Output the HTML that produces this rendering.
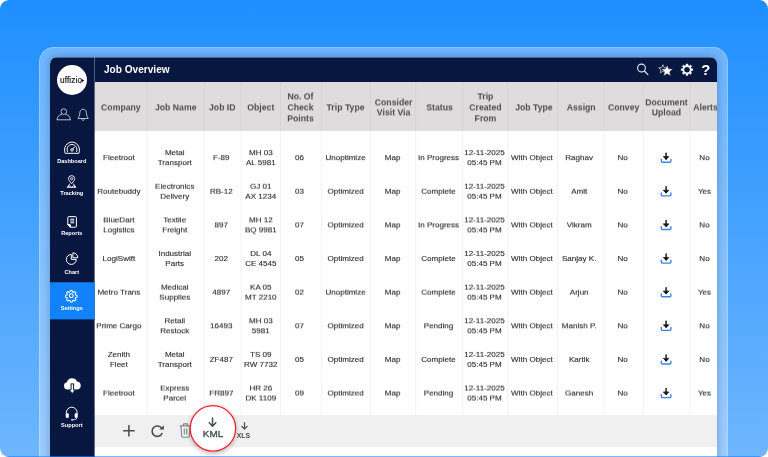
<!DOCTYPE html>
<html lang="en"><head><meta charset="utf-8"><title>Job Overview</title>
<style>
html,body{margin:0;padding:0;background:#fff;}
body{width:768px;height:457px;overflow:hidden;position:relative;font-family:"Liberation Sans",sans-serif;}
.bg{will-change:transform;position:absolute;left:0;top:0;width:768px;height:457px;border-radius:9px;overflow:hidden;background:linear-gradient(180deg,#1e8fff 0%,#6eb6ff 100%);}
.frame{position:absolute;left:39px;top:47px;width:689px;height:430px;border-radius:15px;background:rgba(255,255,255,.33);box-shadow:inset 0 0 0 1px rgba(255,255,255,.22);}
.shadow{position:absolute;left:50px;top:57px;width:667px;height:420px;border-radius:7px;box-shadow:0 0 8px 1px rgba(10,40,100,.26);}
.panel{position:absolute;left:50px;top:57px;width:667px;height:400px;border-radius:7px 7px 0 0;overflow:hidden;background:#fff;}
.side{position:absolute;left:0;top:0;width:45px;height:100%;background:#08173f;}
.top{position:absolute;left:45px;top:0;right:0;height:25px;background:#08173f;box-shadow:0 1px 0 #737689;}
.top:after{content:'';position:absolute;left:-45px;right:0;top:0;height:1px;background:rgba(150,180,225,.5);}
.top:before{content:'';position:absolute;left:-1px;top:0;width:1px;height:25px;background:#4f5b7c;}
.title{position:absolute;left:9.2px;top:0;line-height:25px;color:#fff;font-weight:bold;font-size:10.1px;letter-spacing:0;transform:translate3d(0,0,0) rotate(.01deg);}
.q{position:absolute;left:604.8px;top:.6px;width:12px;text-align:center;line-height:25px;font-size:14.8px;font-weight:bold;color:#fff;}
.thead{position:absolute;left:45px;right:0;top:25px;height:49px;background:#dedcdd;}
.th{position:absolute;top:26px;height:48.5px;display:flex;align-items:center;justify-content:center;text-align:center;font-size:8.7px;line-height:10.6px;font-weight:bold;color:#4d4d4d;white-space:nowrap;transform:translate3d(0,.4px,0) rotate(.01deg);}
.td{position:absolute;height:33.6px;display:flex;align-items:center;justify-content:center;text-align:center;font-size:8.05px;line-height:10.3px;color:#2a2a2a;-webkit-text-stroke:.12px #2a2a2a;white-space:nowrap;}
.foot{position:absolute;left:45px;right:0;top:358px;height:31.6px;background:#f0f0f0;}
.lbl{position:absolute;left:0;width:43.6px;text-align:center;color:#fff;font-weight:bold;font-size:5.6px;line-height:7px;}
.logo{position:absolute;left:7px;top:7.5px;width:30px;height:30px;border-radius:50%;background:#fff;}
.logo span{position:absolute;left:3.1px;top:10.7px;font-size:8.3px;line-height:10px;color:#111118;letter-spacing:.08px;white-space:nowrap;-webkit-text-stroke:.15px #111118;transform:translate3d(0,0,0) rotate(.01deg);}
.kml{position:absolute;left:140px;top:348px;width:46px;height:46.6px;border-radius:50%;background:#fff;box-shadow:0 1.5px 5px rgba(0,0,0,.3);}
.kml span{position:absolute;left:0;right:0;top:22.6px;transform:translate3d(0,0,0) rotate(.01deg);text-align:center;font-size:9.9px;line-height:12px;color:#44504a;-webkit-text-stroke:.35px #44504a;}
.xls{position:absolute;left:183.4px;top:374.6px;width:20px;text-align:center;font-size:6.9px;line-height:8px;color:#44504a;font-weight:bold;}
.ov{position:absolute;left:0;top:0;}
.edge{position:absolute;left:0;top:456px;width:768px;height:1px;background:rgba(30,130,255,.6);}
svg{display:block;overflow:visible}
</style></head><body>
<div class="bg">
<div class="frame"></div><div class="shadow"></div>
<div class="panel">
<div class="side">
<div class="logo"><span>uffizio</span></div>
<div class="lbl" style="top:101.1px">Dashboard</div>
<div class="lbl" style="top:133px">Tracking</div>
<div class="lbl" style="top:173.3px">Reports</div>
<div class="lbl" style="top:211.6px">Chart</div>
<div class="lbl" style="top:248px;z-index:2">Settings</div>
<div class="lbl" style="top:365px">Support</div>
</div>
<div class="top"><div class="title">Job Overview</div><div class="q">?</div></div>
<div class="thead"></div>
<div class="th" style="left:44.9px;width:51.8px"><span>Company</span></div>
<div class="th" style="left:96.8px;width:57.5px"><span>Job Name</span></div>
<div class="th" style="left:154.3px;width:36.6px"><span>Job ID</span></div>
<div class="th" style="left:190.9px;width:39.6px"><span>Object</span></div>
<div class="th" style="left:229.7px;width:40.9px"><span>No. Of<br>Check<br>Points</span></div>
<div class="th" style="left:271.4px;width:49.1px"><span>Trip Type</span></div>
<div class="th" style="left:320.5px;width:45.2px"><span>Consider<br>Visit Via</span></div>
<div class="th" style="left:365.7px;width:47.1px"><span>Status</span></div>
<div class="th" style="left:412.8px;width:44.9px"><span>Trip<br>Created<br>From</span></div>
<div class="th" style="left:458.9px;width:49.8px"><span>Job Type</span></div>
<div class="th" style="left:507.5px;width:46.4px"><span>Assign</span></div>
<div class="th" style="left:553.9px;width:39.3px"><span>Convey</span></div>
<div class="th" style="left:593.2px;width:46.8px"><span>Document<br>Upload</span></div>
<div class="th" style="left:641.6px;width:27px"><span>Alerts</span></div>
<div class="td" style="left:43.4px;top:84px;width:51.8px;transform:translate3d(0,0.15px,0) rotate(.01deg)"><span>Fleetroot</span></div>
<div class="td" style="left:96.1px;top:84px;width:57.5px;transform:translate3d(0,0.15px,0) rotate(.01deg)"><span>Metal<br>Transport</span></div>
<div class="td" style="left:152.8px;top:84px;width:36.6px;transform:translate3d(0,0.15px,0) rotate(.01deg)"><span>F-89</span></div>
<div class="td" style="left:190.7px;top:84px;width:39.6px;transform:translate3d(0,0.15px,0) rotate(.01deg)"><span>MH 03<br>AL 5981</span></div>
<div class="td" style="left:229.1px;top:84px;width:40.9px;transform:translate3d(0,0.15px,0) rotate(.01deg)"><span>06</span></div>
<div class="td" style="left:270.6px;top:84px;width:49.1px;transform:translate3d(0,0.15px,0) rotate(.01deg)"><span>Unoptimize</span></div>
<div class="td" style="left:319.8px;top:84px;width:45.2px;transform:translate3d(0,0.15px,0) rotate(.01deg)"><span>Map</span></div>
<div class="td" style="left:364.5px;top:84px;width:47.1px;transform:translate3d(0,0.15px,0) rotate(.01deg)"><span>In Progress</span></div>
<div class="td" style="left:412.05px;top:84px;width:44.9px;transform:translate3d(0,0.15px,0) rotate(.01deg)"><span>12-11-2025<br>05:45 PM</span></div>
<div class="td" style="left:457.3px;top:84px;width:49.8px;transform:translate3d(0,0.15px,0) rotate(.01deg)"><span>With Object</span></div>
<div class="td" style="left:505.9px;top:84px;width:46.4px;transform:translate3d(0,0.15px,0) rotate(.01deg)"><span>Raghav</span></div>
<div class="td" style="left:553px;top:84px;width:39.3px;transform:translate3d(0,0.15px,0) rotate(.01deg)"><span>No</span></div>
<div class="td" style="left:640.6px;top:84px;width:27px;transform:translate3d(0,0.15px,0) rotate(.01deg)"><span>No</span></div>
<div class="td" style="left:43.4px;top:117px;width:51.8px;transform:translate3d(0,0.78px,0) rotate(.01deg)"><span>Routebuddy</span></div>
<div class="td" style="left:96.1px;top:117px;width:57.5px;transform:translate3d(0,0.78px,0) rotate(.01deg)"><span>Electronics<br>Delivery</span></div>
<div class="td" style="left:152.8px;top:117px;width:36.6px;transform:translate3d(0,0.78px,0) rotate(.01deg)"><span>RB-12</span></div>
<div class="td" style="left:190.7px;top:117px;width:39.6px;transform:translate3d(0,0.78px,0) rotate(.01deg)"><span>GJ 01<br>AX 1234</span></div>
<div class="td" style="left:229.1px;top:117px;width:40.9px;transform:translate3d(0,0.78px,0) rotate(.01deg)"><span>03</span></div>
<div class="td" style="left:270.6px;top:117px;width:49.1px;transform:translate3d(0,0.78px,0) rotate(.01deg)"><span>Optimized</span></div>
<div class="td" style="left:319.8px;top:117px;width:45.2px;transform:translate3d(0,0.78px,0) rotate(.01deg)"><span>Map</span></div>
<div class="td" style="left:364.5px;top:117px;width:47.1px;transform:translate3d(0,0.78px,0) rotate(.01deg)"><span>Complete</span></div>
<div class="td" style="left:412.05px;top:117px;width:44.9px;transform:translate3d(0,0.78px,0) rotate(.01deg)"><span>12-11-2025<br>05:45 PM</span></div>
<div class="td" style="left:457.3px;top:117px;width:49.8px;transform:translate3d(0,0.78px,0) rotate(.01deg)"><span>With Object</span></div>
<div class="td" style="left:505.9px;top:117px;width:46.4px;transform:translate3d(0,0.78px,0) rotate(.01deg)"><span>Amit</span></div>
<div class="td" style="left:553px;top:117px;width:39.3px;transform:translate3d(0,0.78px,0) rotate(.01deg)"><span>No</span></div>
<div class="td" style="left:640.6px;top:117px;width:27px;transform:translate3d(0,0.78px,0) rotate(.01deg)"><span>Yes</span></div>
<div class="td" style="left:43.4px;top:151px;width:51.8px;transform:translate3d(0,0.41px,0) rotate(.01deg)"><span>BlueDart<br>Logistics</span></div>
<div class="td" style="left:96.1px;top:151px;width:57.5px;transform:translate3d(0,0.41px,0) rotate(.01deg)"><span>Textile<br>Freight</span></div>
<div class="td" style="left:152.8px;top:151px;width:36.6px;transform:translate3d(0,0.41px,0) rotate(.01deg)"><span>897</span></div>
<div class="td" style="left:190.7px;top:151px;width:39.6px;transform:translate3d(0,0.41px,0) rotate(.01deg)"><span>MH 12<br>BQ 9981</span></div>
<div class="td" style="left:229.1px;top:151px;width:40.9px;transform:translate3d(0,0.41px,0) rotate(.01deg)"><span>07</span></div>
<div class="td" style="left:270.6px;top:151px;width:49.1px;transform:translate3d(0,0.41px,0) rotate(.01deg)"><span>Optimized</span></div>
<div class="td" style="left:319.8px;top:151px;width:45.2px;transform:translate3d(0,0.41px,0) rotate(.01deg)"><span>Map</span></div>
<div class="td" style="left:364.5px;top:151px;width:47.1px;transform:translate3d(0,0.41px,0) rotate(.01deg)"><span>In Progress</span></div>
<div class="td" style="left:412.05px;top:151px;width:44.9px;transform:translate3d(0,0.41px,0) rotate(.01deg)"><span>12-11-2025<br>05:45 PM</span></div>
<div class="td" style="left:457.3px;top:151px;width:49.8px;transform:translate3d(0,0.41px,0) rotate(.01deg)"><span>With Object</span></div>
<div class="td" style="left:505.9px;top:151px;width:46.4px;transform:translate3d(0,0.41px,0) rotate(.01deg)"><span>Vikram</span></div>
<div class="td" style="left:553px;top:151px;width:39.3px;transform:translate3d(0,0.41px,0) rotate(.01deg)"><span>No</span></div>
<div class="td" style="left:640.6px;top:151px;width:27px;transform:translate3d(0,0.41px,0) rotate(.01deg)"><span>No</span></div>
<div class="td" style="left:43.4px;top:185px;width:51.8px;transform:translate3d(0,0.04px,0) rotate(.01deg)"><span>LogiSwift</span></div>
<div class="td" style="left:96.1px;top:185px;width:57.5px;transform:translate3d(0,0.04px,0) rotate(.01deg)"><span>Industrial<br>Parts</span></div>
<div class="td" style="left:152.8px;top:185px;width:36.6px;transform:translate3d(0,0.04px,0) rotate(.01deg)"><span>202</span></div>
<div class="td" style="left:190.7px;top:185px;width:39.6px;transform:translate3d(0,0.04px,0) rotate(.01deg)"><span>DL 04<br>CE 4545</span></div>
<div class="td" style="left:229.1px;top:185px;width:40.9px;transform:translate3d(0,0.04px,0) rotate(.01deg)"><span>05</span></div>
<div class="td" style="left:270.6px;top:185px;width:49.1px;transform:translate3d(0,0.04px,0) rotate(.01deg)"><span>Optimized</span></div>
<div class="td" style="left:319.8px;top:185px;width:45.2px;transform:translate3d(0,0.04px,0) rotate(.01deg)"><span>Map</span></div>
<div class="td" style="left:364.5px;top:185px;width:47.1px;transform:translate3d(0,0.04px,0) rotate(.01deg)"><span>Complete</span></div>
<div class="td" style="left:412.05px;top:185px;width:44.9px;transform:translate3d(0,0.04px,0) rotate(.01deg)"><span>12-11-2025<br>05:45 PM</span></div>
<div class="td" style="left:457.3px;top:185px;width:49.8px;transform:translate3d(0,0.04px,0) rotate(.01deg)"><span>With Object</span></div>
<div class="td" style="left:505.9px;top:185px;width:46.4px;transform:translate3d(0,0.04px,0) rotate(.01deg)"><span>Sanjay K.</span></div>
<div class="td" style="left:553px;top:185px;width:39.3px;transform:translate3d(0,0.04px,0) rotate(.01deg)"><span>No</span></div>
<div class="td" style="left:640.6px;top:185px;width:27px;transform:translate3d(0,0.04px,0) rotate(.01deg)"><span>No</span></div>
<div class="td" style="left:43.4px;top:218px;width:51.8px;transform:translate3d(0,0.67px,0) rotate(.01deg)"><span>Metro Trans</span></div>
<div class="td" style="left:96.1px;top:218px;width:57.5px;transform:translate3d(0,0.67px,0) rotate(.01deg)"><span>Medical<br>Supplies</span></div>
<div class="td" style="left:152.8px;top:218px;width:36.6px;transform:translate3d(0,0.67px,0) rotate(.01deg)"><span>4897</span></div>
<div class="td" style="left:190.7px;top:218px;width:39.6px;transform:translate3d(0,0.67px,0) rotate(.01deg)"><span>KA 05<br>MT 2210</span></div>
<div class="td" style="left:229.1px;top:218px;width:40.9px;transform:translate3d(0,0.67px,0) rotate(.01deg)"><span>02</span></div>
<div class="td" style="left:270.6px;top:218px;width:49.1px;transform:translate3d(0,0.67px,0) rotate(.01deg)"><span>Unoptimize</span></div>
<div class="td" style="left:319.8px;top:218px;width:45.2px;transform:translate3d(0,0.67px,0) rotate(.01deg)"><span>Map</span></div>
<div class="td" style="left:364.5px;top:218px;width:47.1px;transform:translate3d(0,0.67px,0) rotate(.01deg)"><span>Complete</span></div>
<div class="td" style="left:412.05px;top:218px;width:44.9px;transform:translate3d(0,0.67px,0) rotate(.01deg)"><span>12-11-2025<br>05:45 PM</span></div>
<div class="td" style="left:457.3px;top:218px;width:49.8px;transform:translate3d(0,0.67px,0) rotate(.01deg)"><span>With Object</span></div>
<div class="td" style="left:505.9px;top:218px;width:46.4px;transform:translate3d(0,0.67px,0) rotate(.01deg)"><span>Arjun</span></div>
<div class="td" style="left:553px;top:218px;width:39.3px;transform:translate3d(0,0.67px,0) rotate(.01deg)"><span>No</span></div>
<div class="td" style="left:640.6px;top:218px;width:27px;transform:translate3d(0,0.67px,0) rotate(.01deg)"><span>Yes</span></div>
<div class="td" style="left:43.4px;top:252px;width:51.8px;transform:translate3d(0,0.3px,0) rotate(.01deg)"><span>Prime Cargo</span></div>
<div class="td" style="left:96.1px;top:252px;width:57.5px;transform:translate3d(0,0.3px,0) rotate(.01deg)"><span>Retail<br>Restock</span></div>
<div class="td" style="left:152.8px;top:252px;width:36.6px;transform:translate3d(0,0.3px,0) rotate(.01deg)"><span>16493</span></div>
<div class="td" style="left:190.7px;top:252px;width:39.6px;transform:translate3d(0,0.3px,0) rotate(.01deg)"><span>MH 03<br>5981</span></div>
<div class="td" style="left:229.1px;top:252px;width:40.9px;transform:translate3d(0,0.3px,0) rotate(.01deg)"><span>07</span></div>
<div class="td" style="left:270.6px;top:252px;width:49.1px;transform:translate3d(0,0.3px,0) rotate(.01deg)"><span>Optimized</span></div>
<div class="td" style="left:319.8px;top:252px;width:45.2px;transform:translate3d(0,0.3px,0) rotate(.01deg)"><span>Map</span></div>
<div class="td" style="left:364.5px;top:252px;width:47.1px;transform:translate3d(0,0.3px,0) rotate(.01deg)"><span>Pending</span></div>
<div class="td" style="left:412.05px;top:252px;width:44.9px;transform:translate3d(0,0.3px,0) rotate(.01deg)"><span>12-11-2025<br>05:45 PM</span></div>
<div class="td" style="left:457.3px;top:252px;width:49.8px;transform:translate3d(0,0.3px,0) rotate(.01deg)"><span>With Object</span></div>
<div class="td" style="left:505.9px;top:252px;width:46.4px;transform:translate3d(0,0.3px,0) rotate(.01deg)"><span>Manish P.</span></div>
<div class="td" style="left:553px;top:252px;width:39.3px;transform:translate3d(0,0.3px,0) rotate(.01deg)"><span>No</span></div>
<div class="td" style="left:640.6px;top:252px;width:27px;transform:translate3d(0,0.3px,0) rotate(.01deg)"><span>No</span></div>
<div class="td" style="left:43.4px;top:285px;width:51.8px;transform:translate3d(0,0.93px,0) rotate(.01deg)"><span>Zenith<br>Fleet</span></div>
<div class="td" style="left:96.1px;top:285px;width:57.5px;transform:translate3d(0,0.93px,0) rotate(.01deg)"><span>Metal<br>Transport</span></div>
<div class="td" style="left:152.8px;top:285px;width:36.6px;transform:translate3d(0,0.93px,0) rotate(.01deg)"><span>ZF487</span></div>
<div class="td" style="left:190.7px;top:285px;width:39.6px;transform:translate3d(0,0.93px,0) rotate(.01deg)"><span>TS 09<br>RW 7732</span></div>
<div class="td" style="left:229.1px;top:285px;width:40.9px;transform:translate3d(0,0.93px,0) rotate(.01deg)"><span>05</span></div>
<div class="td" style="left:270.6px;top:285px;width:49.1px;transform:translate3d(0,0.93px,0) rotate(.01deg)"><span>Optimized</span></div>
<div class="td" style="left:319.8px;top:285px;width:45.2px;transform:translate3d(0,0.93px,0) rotate(.01deg)"><span>Map</span></div>
<div class="td" style="left:364.5px;top:285px;width:47.1px;transform:translate3d(0,0.93px,0) rotate(.01deg)"><span>Complete</span></div>
<div class="td" style="left:412.05px;top:285px;width:44.9px;transform:translate3d(0,0.93px,0) rotate(.01deg)"><span>12-11-2025<br>05:45 PM</span></div>
<div class="td" style="left:457.3px;top:285px;width:49.8px;transform:translate3d(0,0.93px,0) rotate(.01deg)"><span>With Object</span></div>
<div class="td" style="left:505.9px;top:285px;width:46.4px;transform:translate3d(0,0.93px,0) rotate(.01deg)"><span>Kartik</span></div>
<div class="td" style="left:553px;top:285px;width:39.3px;transform:translate3d(0,0.93px,0) rotate(.01deg)"><span>No</span></div>
<div class="td" style="left:640.6px;top:285px;width:27px;transform:translate3d(0,0.93px,0) rotate(.01deg)"><span>No</span></div>
<div class="td" style="left:43.4px;top:319px;width:51.8px;transform:translate3d(0,0.56px,0) rotate(.01deg)"><span>Fleetroot</span></div>
<div class="td" style="left:96.1px;top:319px;width:57.5px;transform:translate3d(0,0.56px,0) rotate(.01deg)"><span>Express<br>Parcel</span></div>
<div class="td" style="left:152.8px;top:319px;width:36.6px;transform:translate3d(0,0.56px,0) rotate(.01deg)"><span>FR897</span></div>
<div class="td" style="left:190.7px;top:319px;width:39.6px;transform:translate3d(0,0.56px,0) rotate(.01deg)"><span>HR 26<br>DK 1109</span></div>
<div class="td" style="left:229.1px;top:319px;width:40.9px;transform:translate3d(0,0.56px,0) rotate(.01deg)"><span>09</span></div>
<div class="td" style="left:270.6px;top:319px;width:49.1px;transform:translate3d(0,0.56px,0) rotate(.01deg)"><span>Optimized</span></div>
<div class="td" style="left:319.8px;top:319px;width:45.2px;transform:translate3d(0,0.56px,0) rotate(.01deg)"><span>Map</span></div>
<div class="td" style="left:364.5px;top:319px;width:47.1px;transform:translate3d(0,0.56px,0) rotate(.01deg)"><span>Pending</span></div>
<div class="td" style="left:412.05px;top:319px;width:44.9px;transform:translate3d(0,0.56px,0) rotate(.01deg)"><span>12-11-2025<br>05:45 PM</span></div>
<div class="td" style="left:457.3px;top:319px;width:49.8px;transform:translate3d(0,0.56px,0) rotate(.01deg)"><span>With Object</span></div>
<div class="td" style="left:505.9px;top:319px;width:46.4px;transform:translate3d(0,0.56px,0) rotate(.01deg)"><span>Ganesh</span></div>
<div class="td" style="left:553px;top:319px;width:39.3px;transform:translate3d(0,0.56px,0) rotate(.01deg)"><span>No</span></div>
<div class="td" style="left:640.6px;top:319px;width:27px;transform:translate3d(0,0.56px,0) rotate(.01deg)"><span>Yes</span></div>
<div class="foot"></div>
<svg class="ov" style="left:-50px;top:-57px" width="768" height="457" viewBox="0 0 768 457"><rect x="146.30" y="82.5" width="1" height="48.5" fill="#d6d4d5"/><rect x="146.30" y="131" width="1" height="284" fill="#f3f3f3"/><rect x="203.80" y="82.5" width="1" height="48.5" fill="#d6d4d5"/><rect x="203.80" y="131" width="1" height="284" fill="#f3f3f3"/><rect x="240.40" y="82.5" width="1" height="48.5" fill="#d6d4d5"/><rect x="240.40" y="131" width="1" height="284" fill="#f3f3f3"/><rect x="280.00" y="82.5" width="1" height="48.5" fill="#d6d4d5"/><rect x="280.00" y="131" width="1" height="284" fill="#f3f3f3"/><rect x="320.90" y="82.5" width="1" height="48.5" fill="#d6d4d5"/><rect x="320.90" y="131" width="1" height="284" fill="#f3f3f3"/><rect x="370.00" y="82.5" width="1" height="48.5" fill="#d6d4d5"/><rect x="370.00" y="131" width="1" height="284" fill="#f3f3f3"/><rect x="415.20" y="82.5" width="1" height="48.5" fill="#d6d4d5"/><rect x="415.20" y="131" width="1" height="284" fill="#f3f3f3"/><rect x="462.30" y="82.5" width="1" height="48.5" fill="#d6d4d5"/><rect x="462.30" y="131" width="1" height="284" fill="#f3f3f3"/><rect x="507.20" y="82.5" width="1" height="48.5" fill="#d6d4d5"/><rect x="507.20" y="131" width="1" height="284" fill="#f3f3f3"/><rect x="557.00" y="82.5" width="1" height="48.5" fill="#d6d4d5"/><rect x="557.00" y="131" width="1" height="284" fill="#f3f3f3"/><rect x="603.40" y="82.5" width="1" height="48.5" fill="#d6d4d5"/><rect x="603.40" y="131" width="1" height="284" fill="#f3f3f3"/><rect x="642.70" y="82.5" width="1" height="48.5" fill="#d6d4d5"/><rect x="642.70" y="131" width="1" height="284" fill="#f3f3f3"/><rect x="689.50" y="82.5" width="1" height="48.5" fill="#d6d4d5"/><rect x="689.50" y="131" width="1" height="284" fill="#f3f3f3"/><rect x="94.600" y="82.500" width=".4" height="48.500" fill="#dedcdd"/><rect x="94.600" y="131" width=".4" height="284" fill="#fff"/><rect x="94.600" y="415" width=".4" height="31.600" fill="#f0f0f0"/><rect x="94.600" y="446.600" width=".4" height="10" fill="#fff"/><rect x="50" y="282.3" width="44.600" height="37.100" fill="#1282fa"/><path d="M81.600 78.900L84.300 80.600L81.600 82.300Z" fill="#111118"/><g fill="none" stroke="#c9ceda" stroke-width=".9"><circle cx="63.8" cy="111.6" r="2.8"/><path d="M57.1 119.8C57.1 116.2 59.6 114.8 61.9 114.3M70.3 119.8C70.3 116.2 67.8 114.8 65.7 114.300M56.700 119.800H70.700"/><path d="M83.100 109.200C80.600 109.200 79.800 111.400 79.800 113.200C79.800 116 78.400 117.200 78 118.500H88.200C87.800 117.200 86.400 116 86.400 113.200C86.400 111.400 85.600 109.200 83.100 109.200ZM81.800 119.300C82 120.700 84.200 120.700 84.400 119.300"/></g><g transform="translate(64,141.3)" fill="none" stroke="#fff" stroke-width="1"><path d="M1.200 12C-1 6 3 .8 8 .8S17 6 14.800 12Z"/><path d="M3.600 10.600C2 6.600 4.600 3.200 8 3.200S14 6.600 12.400 10.600"/><circle cx="8" cy="8.600" r="1.200"/><path d="M8.800 7.700L10.600 5.400"/></g><g transform="translate(66.6,175)" fill="none" stroke="#fff" stroke-width=".9" stroke-linejoin="round"><path d="M5 8.600C3 6.300 1.900 5 1.900 3.700A3.100 3.100 0 0 1 8.100 3.700C8.100 5 7 6.300 5 8.600Z"/><circle cx="5" cy="3.700" r="1.100"/><path d="M3.300 8.600L.8 12.300H9.200L6.700 8.600M.8 12.300L3.400 10.800L5 12.300L6.600 10.800L9.200 12.300"/></g><g transform="translate(67,216)" fill="none" stroke="#fff" stroke-width="1" stroke-linejoin="round"><path d="M.8 8.800V1.600Q.8 .6 1.800 .6H8.400Q9.400 .6 9.400 1.600V10.200Q9.400 11.200 8.400 11.200H3.200L.8 8.800H3.200V11.200"/><path d="M.8 8.800H3.200V11.200Z" fill="#fff"/><path d="M3.300 3.200H7.200M3.300 5H7.200M3.300 6.800H7.200"/></g><g transform="translate(65.5,252)" fill="none" stroke="#fff" stroke-width="1" stroke-linejoin="round"><path d="M5.800 2.400A5 5 0 1 0 10.800 7.400H5.800Z"/><path d="M7.400 .8A5 5 0 0 1 12.300 5.800H7.400Z"/></g><g transform="translate(64.75,289.15) scale(.5417)" fill="none" stroke="#fff" stroke-width="1.850" stroke-linejoin="round"><circle cx="12" cy="12" r="3.600"/><path d="M10.300 2.500h3.400l.5 2.700 1.900.8 2.300-1.600 2.400 2.400-1.600 2.300.8 1.900 2.700.5v3.400l-2.700.5-.8 1.900 1.600 2.300-2.400 2.400-2.300-1.600-1.900.8-.5 2.700h-3.400l-.5-2.700-1.900-.8-2.300 1.600-2.400-2.400 1.600-2.300-.8-1.900-2.700-.5v-3.400l2.700-.5.800-1.900-1.600-2.300 2.400-2.400 2.300 1.600 1.900-.8z"/></g><g transform="translate(63.2,378)"><path d="M4.400 11.600A3.700 3.700 0 0 1 3.700 4.300A5.300 5.300 0 0 1 13.700 3.500A4.100 4.100 0 0 1 14.300 11.600Z" fill="#fff"/><path d="M9.100 5.400V12.200" stroke="#08173f" stroke-width="3.500" fill="none"/><path d="M6.200 11.700H12L9.100 15.400Z" fill="#fff" stroke="#08173f" stroke-width=".7"/><path d="M9.100 6.300V12.500" stroke="#fff" stroke-width="1.500" fill="none"/></g><g transform="translate(64.35,406)" fill="none" stroke="#fff" stroke-width="1"><path d="M2 8.600V6.600A5.400 5.400 0 0 1 12.800 6.600V8.600"/><rect x="1.700" y="7.400" width="2.500" height="4.400" rx="1.100" fill="#fff" stroke-width=".6"/><rect x="10.600" y="7.400" width="2.500" height="4.400" rx="1.100" fill="#fff" stroke-width=".6"/><path d="M12.400 11.800C12.400 13.400 10.500 13.800 8.600 13.800" stroke-width=".9"/><circle cx="7.700" cy="13.800" r=".9" fill="#fff" stroke="none"/></g><g fill="none" stroke="#e3e6ee" stroke-width="1.100" stroke-linecap="round"><circle cx="641.5" cy="68" r="3.900"/><path d="M644.400 71L647.900 74.700"/></g><path d="M662.90 64.70L664.10 67.54L667.18 67.81L664.85 69.83L665.55 72.84L662.90 71.25L660.25 72.84L660.95 69.83L658.62 67.81L661.70 67.54Z" fill="none" stroke="#e3e6ee" stroke-width=".7" stroke-linejoin="round"/><path d="M667.10 64.90L668.69 68.82L672.90 69.11L669.67 71.83L670.69 75.94L667.10 73.70L663.51 75.94L664.53 71.83L661.30 69.11L665.51 68.82Z" fill="#fff" stroke="#08173f" stroke-width=".5" stroke-linejoin="round"/><path d="M686.04 65.51L686.09 63.97L687.91 63.97L687.96 65.51L689.28 66.06L690.41 65.01L691.69 66.29L690.64 67.42L691.19 68.74L692.73 68.79L692.73 70.61L691.19 70.66L690.64 71.98L691.69 73.11L690.41 74.39L689.28 73.34L687.96 73.89L687.91 75.43L686.09 75.43L686.04 73.89L684.72 73.34L683.59 74.39L682.31 73.11L683.36 71.98L682.81 70.66L681.27 70.61L681.27 68.79L682.81 68.74L683.36 67.42L682.31 66.29L683.59 65.01L684.72 66.06Z" fill="#fff" stroke="#fff" stroke-width=".5" stroke-linejoin="round"/><circle cx="687" cy="69.700" r="2.800" fill="#08173f"/><g transform="translate(666.1,157.75)" fill="none" stroke-linecap="round" stroke-linejoin="round"><path d="M0 -4.600V1.200" stroke="#111" stroke-width="1.400"/><path d="M-2.500 -.9L0 1.700L2.500 -.9Z" fill="#111" stroke="#111" stroke-width=".8"/><path d="M-4.800 1.600V3.300Q-4.800 4.500 -3.600 4.500H3.600Q4.800 4.500 4.800 3.300V1.600" stroke="#3b82f6" stroke-width="1.400"/></g><g transform="translate(666.1,191.38)" fill="none" stroke-linecap="round" stroke-linejoin="round"><path d="M0 -4.600V1.200" stroke="#111" stroke-width="1.400"/><path d="M-2.500 -.9L0 1.700L2.500 -.9Z" fill="#111" stroke="#111" stroke-width=".8"/><path d="M-4.800 1.600V3.300Q-4.800 4.500 -3.600 4.500H3.600Q4.800 4.500 4.800 3.300V1.600" stroke="#3b82f6" stroke-width="1.400"/></g><g transform="translate(666.1,225.01)" fill="none" stroke-linecap="round" stroke-linejoin="round"><path d="M0 -4.600V1.200" stroke="#111" stroke-width="1.400"/><path d="M-2.500 -.9L0 1.700L2.500 -.9Z" fill="#111" stroke="#111" stroke-width=".8"/><path d="M-4.800 1.600V3.300Q-4.800 4.500 -3.600 4.500H3.600Q4.800 4.500 4.800 3.300V1.600" stroke="#3b82f6" stroke-width="1.400"/></g><g transform="translate(666.1,258.64)" fill="none" stroke-linecap="round" stroke-linejoin="round"><path d="M0 -4.600V1.200" stroke="#111" stroke-width="1.400"/><path d="M-2.500 -.9L0 1.700L2.500 -.9Z" fill="#111" stroke="#111" stroke-width=".8"/><path d="M-4.800 1.600V3.300Q-4.800 4.500 -3.600 4.500H3.600Q4.800 4.500 4.800 3.300V1.600" stroke="#3b82f6" stroke-width="1.400"/></g><g transform="translate(666.1,292.27)" fill="none" stroke-linecap="round" stroke-linejoin="round"><path d="M0 -4.600V1.200" stroke="#111" stroke-width="1.400"/><path d="M-2.500 -.9L0 1.700L2.500 -.9Z" fill="#111" stroke="#111" stroke-width=".8"/><path d="M-4.800 1.600V3.300Q-4.800 4.500 -3.600 4.500H3.600Q4.800 4.500 4.800 3.300V1.600" stroke="#3b82f6" stroke-width="1.400"/></g><g transform="translate(666.1,325.90)" fill="none" stroke-linecap="round" stroke-linejoin="round"><path d="M0 -4.600V1.200" stroke="#111" stroke-width="1.400"/><path d="M-2.500 -.9L0 1.700L2.500 -.9Z" fill="#111" stroke="#111" stroke-width=".8"/><path d="M-4.800 1.600V3.300Q-4.800 4.500 -3.600 4.500H3.600Q4.800 4.500 4.800 3.300V1.600" stroke="#3b82f6" stroke-width="1.400"/></g><g transform="translate(666.1,359.53)" fill="none" stroke-linecap="round" stroke-linejoin="round"><path d="M0 -4.600V1.200" stroke="#111" stroke-width="1.400"/><path d="M-2.500 -.9L0 1.700L2.500 -.9Z" fill="#111" stroke="#111" stroke-width=".8"/><path d="M-4.800 1.600V3.300Q-4.800 4.500 -3.600 4.500H3.600Q4.800 4.500 4.800 3.300V1.600" stroke="#3b82f6" stroke-width="1.400"/></g><g transform="translate(666.1,393.16)" fill="none" stroke-linecap="round" stroke-linejoin="round"><path d="M0 -4.600V1.200" stroke="#111" stroke-width="1.400"/><path d="M-2.500 -.9L0 1.700L2.500 -.9Z" fill="#111" stroke="#111" stroke-width=".8"/><path d="M-4.800 1.600V3.300Q-4.800 4.500 -3.600 4.500H3.600Q4.800 4.500 4.800 3.300V1.600" stroke="#3b82f6" stroke-width="1.400"/></g><path d="M128.900 425.100V436.600M123.100 430.850H134.700" stroke="#44504a" stroke-width="1.500" fill="none"/><g fill="none" stroke="#44504a" stroke-width="1.600"><path d="M161.600 428.200A5.200 5.200 0 1 0 162.200 432.900"/><path d="M163.900 425.200V429.600H159.500Z" fill="#44504a" stroke="none"/></g><g transform="translate(179.5,423)" fill="none" stroke="#7c8781" stroke-width="1.100" stroke-linejoin="round"><path d="M.3 2.900H11.700M4 2.700V.9H8V2.700M1.500 3.200L2.200 13.200Q2.300 14.200 3.300 14.200H8.700Q9.700 14.200 9.800 13.200L10.500 3.200M4.800 5.600V11.600M7.200 5.600V11.600"/></g></svg>
<div class="kml"><svg style="position:absolute;left:0;top:0" width="47" height="47" viewBox="190 405 47 47"><circle cx="212.950" cy="428.400" r="22.700" fill="#fff" stroke="#f0222c" stroke-width="1.300"/></svg><svg style="position:absolute;left:18.400px;top:12.300px" width="9" height="11" viewBox="0 0 9 11" stroke="#44504a" stroke-width="1.500" fill="none" stroke-linecap="round" stroke-linejoin="round"><path d="M4.500 .9V9M1.200 5.800L4.500 9.300L7.800 5.800"/></svg><span>KML</span></div>
<svg class="ov" style="left:190.500px;top:365px" width="7" height="8" viewBox="0 0 7 8" stroke="#44504a" stroke-width="1.200" fill="none" stroke-linecap="round" stroke-linejoin="round"><path d="M3.500 .7V6.800M.9 4.300L3.500 7.100L6.100 4.300"/></svg>
<div class="xls">XLS</div>
</div>
<div class="edge"></div>
</div>
</body></html>
